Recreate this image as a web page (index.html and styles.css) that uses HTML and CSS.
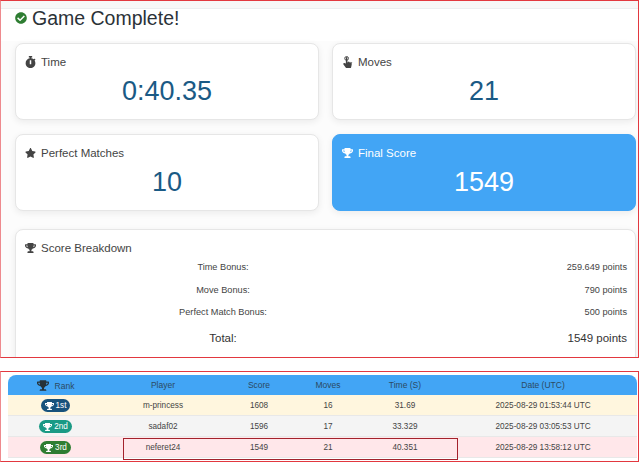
FILE: index.html
```html
<!DOCTYPE html>
<html lang="en">
<head>
<meta charset="utf-8">
<title>Game Complete</title>
<link rel="stylesheet" href="styles.css">
</head>
<body>
<svg class="defs" width="0" height="0" aria-hidden="true">
  <symbol id="i-check" viewBox="0 0 512 512"><path d="M504 256c0 136.967-111.033 248-248 248S8 392.967 8 256 119.033 8 256 8s248 111.033 248 248zM227.314 387.314l184-184c6.248-6.248 6.248-16.379 0-22.627l-22.627-22.627c-6.248-6.249-16.379-6.249-22.628 0L216 308.118l-70.059-70.059c-6.248-6.248-16.379-6.248-22.628 0l-22.627 22.627c-6.248 6.248-6.248 16.379 0 22.627l104 104c6.249 6.249 16.379 6.249 22.628.001z"/></symbol>
  <symbol id="i-watch" viewBox="0 0 448 512"><path d="M432 304c0 114.9-93.1 208-208 208S16 418.9 16 304c0-104 76.3-190.2 176-205.5V64h-28c-6.6 0-12-5.4-12-12V12c0-6.6 5.4-12 12-12h120c6.6 0 12 5.4 12 12v40c0 6.6-5.4 12-12 12h-28v34.5c37.5 5.8 71.7 21.6 99.7 44.6l27.5-27.5c4.7-4.7 12.3-4.7 17 0l28.3 28.3c4.7 4.7 4.7 12.3 0 17l-29.4 29.4-.6.6C419.7 223.3 432 262.2 432 304zm-176 36V188.5c0-6.6-5.4-12-12-12h-40c-6.6 0-12 5.4-12 12V340c0 6.6 5.4 12 12 12h40c6.6 0 12-5.4 12-12z"/></symbol>
  <symbol id="i-hand" viewBox="0 0 448 640"><circle cx="176" cy="128" r="100" fill="none" stroke="currentColor" stroke-width="50"/><path d="M448 368v96c0 3.084-.356 6.159-1.063 9.162l-32 136C410.686 627.23 394.562 640 376 640H168a40 40 0 0 1-32.35-16.473l-128-176C-7.981 426.1-3.31 396.087 18.138 380.489c21.453-15.6 51.469-10.9 67.074 10.548L136 405.8V96c0-22.091 17.908-40 40-40s40 17.909 40 40v272h8v-40c0-22.091 17.908-40 40-40s40 17.909 40 40v40h8v-24c0-22.091 17.908-40 40-40s40 17.909 40 40v24h8c0-22.091 17.908-40 40-40s40 17.909 40 40z"/></symbol>
  <symbol id="i-star" viewBox="0 0 576 512"><path d="M259.3 17.8L194 150.2 47.9 171.5c-26.2 3.8-36.7 36.1-17.7 54.6l105.7 103-25 145.5c-4.5 26.3 23.2 46 46.4 33.7L288 439.6l130.7 68.7c23.2 12.2 50.9-7.4 46.4-33.7l-25-145.5 105.7-103c19-18.5 8.5-50.8-17.7-54.6L382 150.2 316.7 17.8c-11.7-23.6-45.6-23.9-57.4 0z"/></symbol>
  <symbol id="i-trophy" viewBox="0 0 576 512"><path d="M552 64H448V24c0-13.3-10.7-24-24-24H152c-13.3 0-24 10.7-24 24v40H24C10.7 64 0 74.7 0 88v56c0 35.7 22.5 72.4 61.9 100.7 31.5 22.7 69.8 37.1 110 41.7C203.3 338.5 240 360 240 360v72h-48c-35.3 0-64 20.7-64 56v12c0 6.6 5.4 12 12 12h296c6.6 0 12-5.4 12-12v-12c0-35.3-28.7-56-64-56h-48v-72s36.7-21.5 68.1-73.6c40.3-4.6 78.7-19 110-41.7 39.3-28.3 61.9-65 61.9-100.7V88c0-13.3-10.7-24-24-24zM99.3 192.8C74.9 175.2 64 155.6 64 144v-16h64.2c1 32.6 5.8 61.2 12.8 86.2-15.1-5.2-29.2-12.4-41.7-21.4zM512 144c0 16.1-17.7 36.1-35.3 48.8-12.5 9-26.7 16.2-41.8 21.4 7-25 11.8-53.6 12.8-86.2H512v16z"/></symbol>
</svg>

<section class="results">
  <div class="strip"></div>
  <h1 class="title"><svg class="icon icon-check"><use href="#i-check"/></svg>Game Complete!</h1>
  <div class="cards">
    <div class="card">
      <div class="label"><svg class="icon"><use href="#i-watch"/></svg>Time</div>
      <div class="value">0:40.35</div>
    </div>
    <div class="card">
      <div class="label"><svg class="icon"><use href="#i-hand"/></svg>Moves</div>
      <div class="value">21</div>
    </div>
    <div class="card">
      <div class="label"><svg class="icon"><use href="#i-star"/></svg>Perfect Matches</div>
      <div class="value">10</div>
    </div>
    <div class="card card-primary">
      <div class="label"><svg class="icon"><use href="#i-trophy"/></svg>Final Score</div>
      <div class="value">1549</div>
    </div>
  </div>
  <div class="breakdown">
    <div class="label"><svg class="icon"><use href="#i-trophy"/></svg>Score Breakdown</div>
    <div class="lines">
      <div class="line"><span class="line-name">Time Bonus:</span><span class="line-points">259.649 points</span></div>
      <div class="line"><span class="line-name">Move Bonus:</span><span class="line-points">790 points</span></div>
      <div class="line"><span class="line-name">Perfect Match Bonus:</span><span class="line-points">500 points</span></div>
      <div class="line line-total"><span class="line-name">Total:</span><span class="line-points">1549 points</span></div>
    </div>
  </div>
</section>

<section class="board">
  <div class="board-inner">
    <div class="row row-head">
      <div><svg class="icon icon-rank"><use href="#i-trophy"/></svg>Rank</div>
      <div>Player</div><div>Score</div><div>Moves</div><div>Time (S)</div><div>Date (UTC)</div>
    </div>
    <div class="row row-gold">
      <div><span class="badge badge-1"><svg class="icon icon-badge"><use href="#i-trophy"/></svg>1st</span></div>
      <div>m-princess</div><div>1608</div><div>16</div><div>31.69</div><div>2025-08-29 01:53:44 UTC</div>
    </div>
    <div class="row row-grey">
      <div><span class="badge badge-2"><svg class="icon icon-badge"><use href="#i-trophy"/></svg>2nd</span></div>
      <div>sadaf02</div><div>1596</div><div>17</div><div>33.329</div><div>2025-08-29 03:05:53 UTC</div>
    </div>
    <div class="row row-pink">
      <div><span class="badge badge-3"><svg class="icon icon-badge"><use href="#i-trophy"/></svg>3rd</span></div>
      <div>neferet24</div><div>1549</div><div>21</div><div>40.351</div><div>2025-08-29 13:58:12 UTC</div>
    </div>
    <div class="marker"></div>
  </div>
</section>
</body>
</html>
```

FILE: styles.css
```css
* { box-sizing: border-box; }

html, body { margin: 0; padding: 0; }

body {
  width: 640px;
  height: 463px;
  overflow: hidden;
  background: #fff;
  font-family: "Liberation Sans", Arial, sans-serif;
  color: #333;
}

.defs { display: block; height: 0; }

.icon {
  display: inline-block;
  width: 11px;
  height: 12px;
  fill: currentColor;
  flex: none;
}

.results {
  width: 639px;
  height: 358px;
  border: 1px solid #e2383f;
  border-left-color: #ee8a8e;
  overflow: hidden;
  background: linear-gradient(#fff 0, #fff 40px, #fcfcfc 40px);
}

.strip {
  height: 8px;
  background: #f7f7f7;
  border-bottom: 1px solid #eceef0;
}

.title {
  display: flex;
  align-items: center;
  gap: 5px;
  height: 18px;
  margin: 0 0 16px 14px;
  font-size: 19.5px;
  font-weight: 400;
  line-height: 18px;
  color: #2b3238;
}

.icon-check { width: 12px; height: 12px; color: #2e7d32; }

.cards {
  display: grid;
  grid-template-columns: 1fr 1fr;
  grid-auto-rows: 77px;
  gap: 14px 13px;
  margin: 0 2px 0 14px;
}

.card,
.breakdown {
  background: #fff;
  border: 1px solid #e6e6e6;
  border-radius: 8px;
  box-shadow: 0 2px 7px rgba(0, 0, 0, .07);
}

.card { padding: 10px 9px 0; }

.card-primary {
  background: #42a5f5;
  border-color: #42a5f5;
  color: #fff;
}

.label {
  display: flex;
  align-items: center;
  gap: 5px;
  height: 16px;
  font-size: 11.5px;
  color: #444;
}

.card-primary .label { color: #fff; }

.value {
  margin-top: 5px;
  font-size: 27px;
  line-height: 32px;
  text-align: center;
  color: #1a5a85;
}

.card-primary .value { color: #fff; }

.breakdown {
  height: 140px;
  margin: 18px 2px 0 14px;
  padding: 10px 8px 0 9px;
}

.line {
  display: grid;
  grid-template-columns: 396px 1fr;
  align-items: center;
  height: 22.5px;
  font-size: 9.2px;
  color: #444;
}

.line-name { text-align: center; }

.line-points { text-align: right; }

.line-total {
  height: 28px;
  font-size: 11.5px;
  color: #333;
}

.board {
  position: relative;
  width: 639px;
  height: 91px;
  margin-top: 13px;
  padding: 3px 1px 0 7px;
  border: 1px solid #e2383f;
  border-left-color: #ee8a8e;
  overflow: hidden;
}

.board-inner { position: relative; }

.row {
  display: grid;
  grid-template-columns: 95px 120px 72px 66px 88px 1fr;
  align-items: center;
  height: 21px;
  padding-top: 1px;
  font-size: 8.2px;
  text-align: center;
  color: #444;
  border-bottom: 1px solid #e8e8e8;
}

.row-head {
  height: 20px;
  padding-top: 0;
  background: #42a5f5;
  border-radius: 8px 8px 0 0;
  border-bottom: 0;
  font-size: 8.5px;
  color: #2c4a62;
}

.row-gold { background: #fff6de; }
.row-grey { background: #f4f4f4; }
.row-pink { background: #ffe7ea; }

.icon-rank {
  width: 12px;
  height: 11px;
  margin-right: 6px;
  vertical-align: -2px;
  color: #263238;
}

.badge {
  display: inline-flex;
  align-items: center;
  gap: 2px;
  height: 13px;
  padding: 0 4px;
  border-radius: 7px;
  color: #fff;
  font-size: 8.2px;
  line-height: 13px;
}

.icon-badge { width: 9px; height: 8px; }

.badge-1 { background: #17527c; }
.badge-2 { background: #1a9a85; }
.badge-3 { background: #2e7d32; }

.marker {
  position: absolute;
  left: 115px;
  top: 63px;
  width: 335px;
  height: 22px;
  border: 1px solid #a3222c;
}
```
